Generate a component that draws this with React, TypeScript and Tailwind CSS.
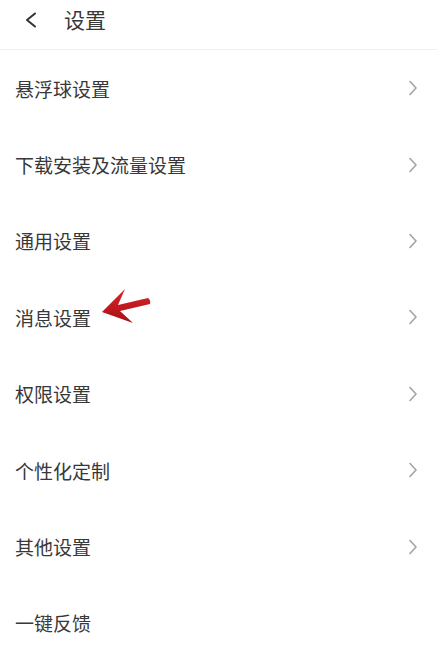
import React from 'react';

const items = [
  { label: '悬浮球设置', chevron: true },
  { label: '下载安装及流量设置', chevron: true },
  { label: '通用设置', chevron: true },
  { label: '消息设置', chevron: true, marked: true },
  { label: '权限设置', chevron: true },
  { label: '个性化定制', chevron: true },
  { label: '其他设置', chevron: true },
  { label: '一键反馈', chevron: false },
];

const Chevron = () => (
  <svg width="10" height="16" viewBox="0 0 10 16" fill="none" className="mr-[19px]">
    <path d="M2 1.5 L8 8 L2 14.5" stroke="#a3a3a3" strokeWidth="1.6" strokeLinecap="round" strokeLinejoin="round" />
  </svg>
);

// red hand-drawn arrow pointing at the row
const RedArrow = () => (
  <svg
    className="absolute left-[98px] top-[6px] w-[56px] h-[40px] pointer-events-none"
    viewBox="98 286 56 40"
  >
    <defs>
      <linearGradient id="ar" x1="0" y1="0" x2="0" y2="1">
        <stop offset="0" stopColor="#d6262b" />
        <stop offset="1" stopColor="#a90f14" />
      </linearGradient>
    </defs>
    <path
      d="M102 313 L125 290 L118 306 L148 299 Q151 301 150 305 L120 312 L133 324 Z"
      fill="url(#ar)"
    />
  </svg>
);

export default function App() {
  return (
    <div className="min-h-screen bg-white text-[#383838] font-['Noto_Sans_CJK_SC','Noto_Sans',sans-serif]">
      <header className="h-[50px] pb-[10px] flex items-center border-b border-[#f0f0f0]">
        <svg width="14" height="16" viewBox="0 0 14 16" fill="none" className="ml-[24px]">
          <path d="M11 1.5 L3 8 L11 14.5" stroke="#333" strokeWidth="2" strokeLinecap="round" strokeLinejoin="round" />
        </svg>
        <h1 className="ml-[26px] text-[21px] leading-none">设置</h1>
      </header>
      <main>
        {items.map(item => (
          <div key={item.label} className="relative h-[76.4px] flex items-center justify-between">
            <span className="pl-[15px] text-[19px] leading-none">{item.label}</span>
            {item.chevron && <Chevron />}
            {item.marked && <RedArrow />}
          </div>
        ))}
      </main>
    </div>
  );
}
